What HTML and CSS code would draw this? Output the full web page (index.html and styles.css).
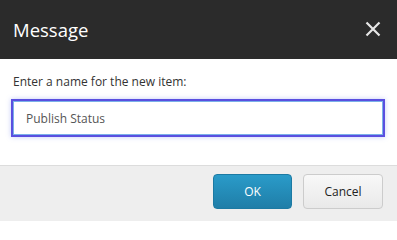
FILE: index.html
```html
<!DOCTYPE html>
<html>
<head>
<meta charset="utf-8">
<link rel="stylesheet" href="styles.css">
</head>
<body>
<div class="dialog">
  <div class="header">
    <span class="title">Message</span>
    <svg class="close" width="16" height="16" viewBox="0 0 16 16"><path d="M1.5 1.5L14.5 14.5M14.5 1.5L1.5 14.5" stroke="#e6e6e6" stroke-width="2.2" fill="none"/></svg>
  </div>
  <div class="body">
    <div class="label">Enter a name for the new item:</div>
    <div class="input">Publish Status</div>
  </div>
  <div class="footer">
    <button class="btn ok">OK</button>
    <button class="btn cancel">Cancel</button>
  </div>
</div>
</body>
</html>
```
FILE: styles.css
```css
html, body { margin: 0; padding: 0; }
body { font-family: "Open Sans", "Noto Sans", sans-serif; background: #fff; width: 397px; height: 221px; overflow: hidden; }
.dialog { display: flex; flex-direction: column; height: 221px; }
.header { height: 59px; background: #2b2b2b; display: flex; align-items: center; justify-content: space-between; padding: 0 16px 0 13px; box-sizing: border-box; }
.title { color: #fff; font-size: 18.5px; line-height: 1; margin-top: 1px; }
.close { display: block; margin-top: -1px; }
.body { height: 106px; padding: 14px 12px 0 11px; box-sizing: border-box; }
.label { color: #333; font-size: 12px; line-height: 18px; padding-left: 2px; }
.input { margin-top: 8px; height: 38px; box-sizing: border-box; border: 2px solid #5a4fe0; box-shadow: inset 0 0 0 1px #7ab0e8, 0 0 5px rgba(90,110,230,0.35); padding: 0 13px; display: flex; align-items: center; font-size: 12px; color: #555; }
.footer { flex: 1; background: #eeeeee; border-top: 1px solid #dcdcdc; display: flex; justify-content: flex-end; align-items: flex-start; padding: 8px 14px 0 0; gap: 11px; }
.btn { font-family: "Open Sans", "Noto Sans", sans-serif; font-size: 12px; height: 35px; border-radius: 4px; padding: 0; cursor: pointer; }
.ok { width: 79px; color: #fff; border: 1px solid #1c7aa3; background: linear-gradient(#2a9bc9, #1f7ea8); }
.cancel { width: 80px; color: #222; border: 1px solid #cccccc; background: linear-gradient(#f8f8f8, #e9e9e9); }
```
